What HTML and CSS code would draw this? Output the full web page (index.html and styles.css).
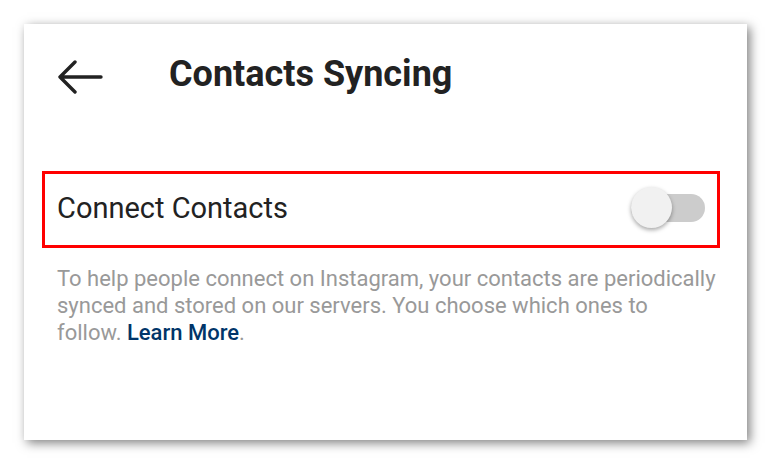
FILE: index.html
```html
<!DOCTYPE html>
<html lang="en">
<head>
    <meta charset="UTF-8">
    <meta name="viewport" content="width=device-width, initial-scale=1.0">
    <title>Contacts Syncing</title>
    <link rel="stylesheet" href="styles.css">
</head>
<body>

<div class="tela">
    <div class="topo">
        <svg class="voltar" width="46" height="34" viewBox="0 0 46 34">
            <path d="M44 17H3M18 2L3 17l15 15" fill="none" stroke="#222" stroke-width="3.4" stroke-linecap="round" stroke-linejoin="round"/>
        </svg>
        <h2>Contacts Syncing</h2>
    </div>

    <div class="opcao">
        <span>Connect Contacts</span>
        <div class="chave"><div class="bola"></div></div>
    </div>

    <p class="info">
        To help people connect on Instagram, your contacts are periodically<br>
        synced and stored on our servers. You choose which ones to<br>
        follow. <a href="#">Learn More</a>.
    </p>
</div>

</body>
</html>
```

FILE: styles.css
```css
body {
    margin: 0;
    padding: 24px;
    background: #fff;
    font-family: Roboto, "Liberation Sans", Arial, sans-serif;
}
.tela {
    width: 723px;
    height: 416px;
    background: #fff;
    box-shadow: 3px 3px 10px rgba(0, 0, 0, 0.5);
    box-sizing: border-box;
    padding-top: 29px;
}
.topo {
    display: flex;
    align-items: center;
    height: 42px;
    padding-left: 33px;
}
.voltar {
    margin-top: 6px;
}
.topo h2 {
    margin: 0 0 0 66px;
    font-size: 36px;
    line-height: 42px;
    font-weight: bold;
    color: #222;
}
.opcao {
    display: flex;
    align-items: center;
    justify-content: space-between;
    margin: 76px 27px 0 18px;
    height: 77px;
    border: 3px solid #f00;
    box-sizing: border-box;
    padding: 0 12px 4px 12px;
    font-size: 29px;
    color: #222;
}
.chave {
    width: 74px;
    height: 28px;
    border-radius: 14px;
    background: #ccc;
    display: flex;
    align-items: center;
}
.bola {
    width: 41px;
    height: 41px;
    border-radius: 50%;
    background: #f1f1f1;
    box-shadow: 0 2px 4px rgba(0, 0, 0, 0.35);
}
.info {
    margin: 17px 20px 0 33px;
    font-size: 22px;
    line-height: 27px;
    color: #999;
}
.info a {
    color: #003569;
    font-weight: 500;
    text-decoration: none;
}
```
